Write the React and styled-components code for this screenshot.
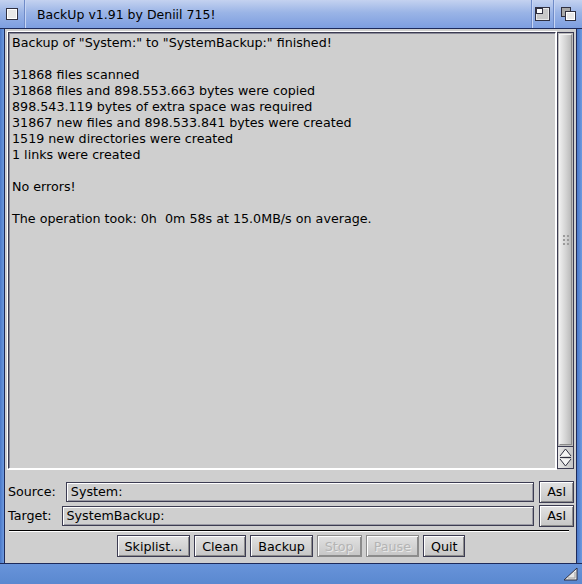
import React from "react";
import styled, { createGlobalStyle } from "styled-components";

const Global = createGlobalStyle`
  html, body { margin: 0; padding: 0; background: #5f8ed6; }
  body { font-family: "DejaVu Sans", sans-serif; font-size: 12.7px; color: #000; }
`;

const Window = styled.div`
  width: 582px;
  height: 584px;
  display: flex;
  flex-direction: column;
  background: #5f8ed6;
  overflow: hidden;
`;

const TitleBar = styled.div`
  height: 29px;
  flex: none;
  display: flex;
  align-items: center;
  background: linear-gradient(to bottom, #c4d2f0 0%, #9ab4e6 45%, #7d9ee0 100%);
  border-bottom: 1px solid #1d2a5a;
  box-sizing: border-box;
`;

const GadgetBox = styled.div`
  width: ${(p) => p.$w}px;
  height: 100%;
  display: flex;
  align-items: center;
  justify-content: center;
  border-${(p) => p.$side}: 1px solid #6f8bc8;
  box-shadow: ${(p) => (p.$side === "right" ? "1px 0 0 #c8d6f4" : "inset 1px 0 0 #c8d6f4")};
`;

const Title = styled.div`
  flex: 1;
  padding-left: 12px;
  font-size: 12.5px;
  color: #000;
`;

const Body = styled.div`
  flex: 1;
  display: flex;
  min-height: 0;
`;

const SideBorder = styled.div`
  width: ${(p) => p.$w}px;
  flex: none;
  background: linear-gradient(to right, #4a78c8, #6d9ae0);
  border-${(p) => p.$side}: 1px solid #1d2a5a;
`;

const Content = styled.div`
  flex: 1;
  background: #cfcfcf;
  display: flex;
  flex-direction: column;
  padding: 3px 2px 0 3px;
`;

const ListRow = styled.div`
  display: flex;
  gap: 1px;
  height: 437px;
  flex: none;
`;

const ListView = styled.div`
  flex: 1;
  border: 1px solid #3c3c52;
  border-right-color: #fff;
  border-bottom-color: #fff;
  box-shadow: 0 0 0 1px #fff, inset 1px 1px 0 #8a8a98;
  padding: 2px 3px;
  line-height: 16px;
  white-space: pre;
`;

const Line = styled.div`
  height: 16px;
`;

const Scroller = styled.div`
  width: 17px;
  flex: none;
  display: flex;
  flex-direction: column;
  border: 1px solid #3c3c52;
  box-sizing: border-box;
`;

const Trough = styled.div`
  flex: 1;
  padding: 1px;
  display: flex;
  background: #bcbcbc;
`;

const Knob = styled.div`
  flex: 1;
  background: linear-gradient(to right, #ececec, #d2d2d2 55%, #bababa);
  border: 1px solid #8a8a8a;
  border-top-color: #f4f4f4;
  border-left-color: #f4f4f4;
  display: flex;
  align-items: center;
  justify-content: center;
`;

const Arrows = styled.div`
  height: 21px;
  flex: none;
  border-top: 1px solid #3c3c52;
  background: linear-gradient(to right, #e8e8e8, #c4c4c4);
  display: flex;
  align-items: center;
  justify-content: center;
`;

const FieldRow = styled.div`
  display: flex;
  align-items: center;
  gap: 5px;
  height: 21px;
  margin-top: ${(p) => p.$mt}px;
`;

const Label = styled.div`
  font-size: 12.7px;
  margin-right: ${(p) => p.$mr || 0}px;
`;

const Field = styled.div`
  flex: 1;
  height: 20px;
  box-sizing: border-box;
  border: 1px solid #3c3c52;
  box-shadow: inset 1px 1px 0 #fff, inset -1px -1px 0 #9a9aa4;
  padding: 0 4px;
  display: flex;
  align-items: center;
  font-size: 12.7px;
`;

const Button = styled.button`
  font-family: "DejaVu Sans", sans-serif;
  font-size: 12.7px;
  height: ${(p) => p.$h || 22}px;
  padding: 0 ${(p) => p.$px || 7}px;
  margin: 0;
  border: 1px solid #3c3c52;
  background: linear-gradient(to bottom, #e2e2e2, #c6c6c6);
  box-shadow: inset 1px 1px 0 #fff, inset -1px -1px 0 #8c8c8c;
  color: ${(p) => (p.disabled ? "#b4b4b4" : "#000")};
  text-shadow: ${(p) => (p.disabled ? "1px 1px 0 #eaeaea" : "none")};
  border-color: ${(p) => (p.disabled ? "#8c8c8c" : "#3c3c52")};
  cursor: default;
`;

const Separator = styled.div`
  height: 1px;
  background: #000;
  border-bottom: 1px solid #fff;
  margin: 4px 5px 0 1px;
`;

const ButtonRow = styled.div`
  display: flex;
  justify-content: center;
  gap: 4px;
  margin-top: 3px;
`;

const BottomBar = styled.div`
  height: 20px;
  flex: none;
  background: linear-gradient(to bottom, #6894da, #5a88d0);
  border-top: 1px solid #1d2a5a;
  display: flex;
  justify-content: flex-end;
  align-items: center;
  padding-right: 4px;
`;

const CloseIcon = () => (
  <svg width="12" height="12" viewBox="0 0 12 12">
    <rect x="0.5" y="0.5" width="11" height="11" fill="#e8e8e8" stroke="#303040" />
    <rect x="1.5" y="1.5" width="9" height="9" fill="none" stroke="#fff" />
  </svg>
);

const ZoomIcon = () => (
  <svg width="15" height="14" viewBox="0 0 15 14">
    <rect x="0.5" y="0.5" width="14" height="13" fill="#c8c8c8" stroke="#303040" />
    <rect x="1.5" y="1.5" width="12" height="11" fill="none" stroke="#e8e8e8" />
    <rect x="1.5" y="1.5" width="6" height="5" fill="#fff" stroke="#303040" />
  </svg>
);

const DepthIcon = () => (
  <svg width="15" height="14" viewBox="0 0 15 14">
    <rect x="0.5" y="0.5" width="9" height="9" fill="#a8a8a8" stroke="#303040" />
    <rect x="4.5" y="4.5" width="10" height="9" fill="#e8e8e8" stroke="#303040" />
    <rect x="5.5" y="5.5" width="8" height="7" fill="none" stroke="#fff" />
  </svg>
);

const Grip = () => (
  <svg width="6" height="10" viewBox="0 0 6 10">
    {[0, 4, 8].map((y) =>
      [0, 4].map((x) => <rect key={`${x}-${y}`} x={x} y={y} width="2" height="2" fill="#9a9a9a" />)
    )}
  </svg>
);

const ArrowIcon = () => (
  <svg width="13" height="19" viewBox="0 0 13 19">
    <path d="M1 8 L6.5 1 L12 8" fill="#f4f4f4" stroke="#303040" />
    <path d="M1 11 L6.5 18 L12 11" fill="#f4f4f4" stroke="#303040" />
    <line x1="1" y1="9.5" x2="12" y2="9.5" stroke="#303040" />
  </svg>
);

const SizeIcon = () => (
  <svg width="15" height="14" viewBox="0 0 15 14">
    <path d="M14 1 L14 13 L1 13 Z" fill="#e8e8e8" stroke="#303040" />
    <path d="M12 5 L12 11 L5 11" fill="none" stroke="#a0a0a0" />
  </svg>
);

const lines = [
  'Backup of "System:" to "SystemBackup:" finished!',
  "",
  "31868 files scanned",
  "31868 files and 898.553.663 bytes were copied",
  "898.543.119 bytes of extra space was required",
  "31867 new files and 898.533.841 bytes were created",
  "1519 new directories were created",
  "1 links were created",
  "",
  "No errors!",
  "",
  "The operation took: 0h  0m 58s at 15.0MB/s on average.",
];

const buttons = [
  { label: "Skiplist...", disabled: false },
  { label: "Clean", disabled: false },
  { label: "Backup", disabled: false },
  { label: "Stop", disabled: true },
  { label: "Pause", disabled: true },
  { label: "Quit", disabled: false },
];

export default function App() {
  return (
    <Window>
      <Global />
      <TitleBar>
        <GadgetBox $w={24} $side="right">
          <CloseIcon />
        </GadgetBox>
        <Title>BackUp v1.91 by Deniil 715!</Title>
        <GadgetBox $w={21} $side="left">
          <ZoomIcon />
        </GadgetBox>
        <GadgetBox $w={28} $side="left">
          <DepthIcon />
        </GadgetBox>
      </TitleBar>
      <Body>
        <SideBorder $w={4} $side="right" />
        <Content>
          <ListRow>
            <ListView>
              {lines.map((l, i) => (
                <Line key={i}>{l}</Line>
              ))}
            </ListView>
            <Scroller>
              <Trough>
                <Knob>
                  <Grip />
                </Knob>
              </Trough>
              <Arrows>
                <ArrowIcon />
              </Arrows>
            </Scroller>
          </ListRow>
          <FieldRow $mt={12}>
            <Label $mr={5}>Source:</Label>
            <Field>System:</Field>
            <Button $px={7}>Asl</Button>
          </FieldRow>
          <FieldRow $mt={3}>
            <Label $mr={5}>Target:</Label>
            <Field>SystemBackup:</Field>
            <Button $px={7}>Asl</Button>
          </FieldRow>
          <Separator />
          <ButtonRow>
            {buttons.map((b) => (
              <Button key={b.label} disabled={b.disabled}>
                {b.label}
              </Button>
            ))}
          </ButtonRow>
        </Content>
        <SideBorder $w={5} $side="left" />
      </Body>
      <BottomBar>
        <SizeIcon />
      </BottomBar>
    </Window>
  );
}
